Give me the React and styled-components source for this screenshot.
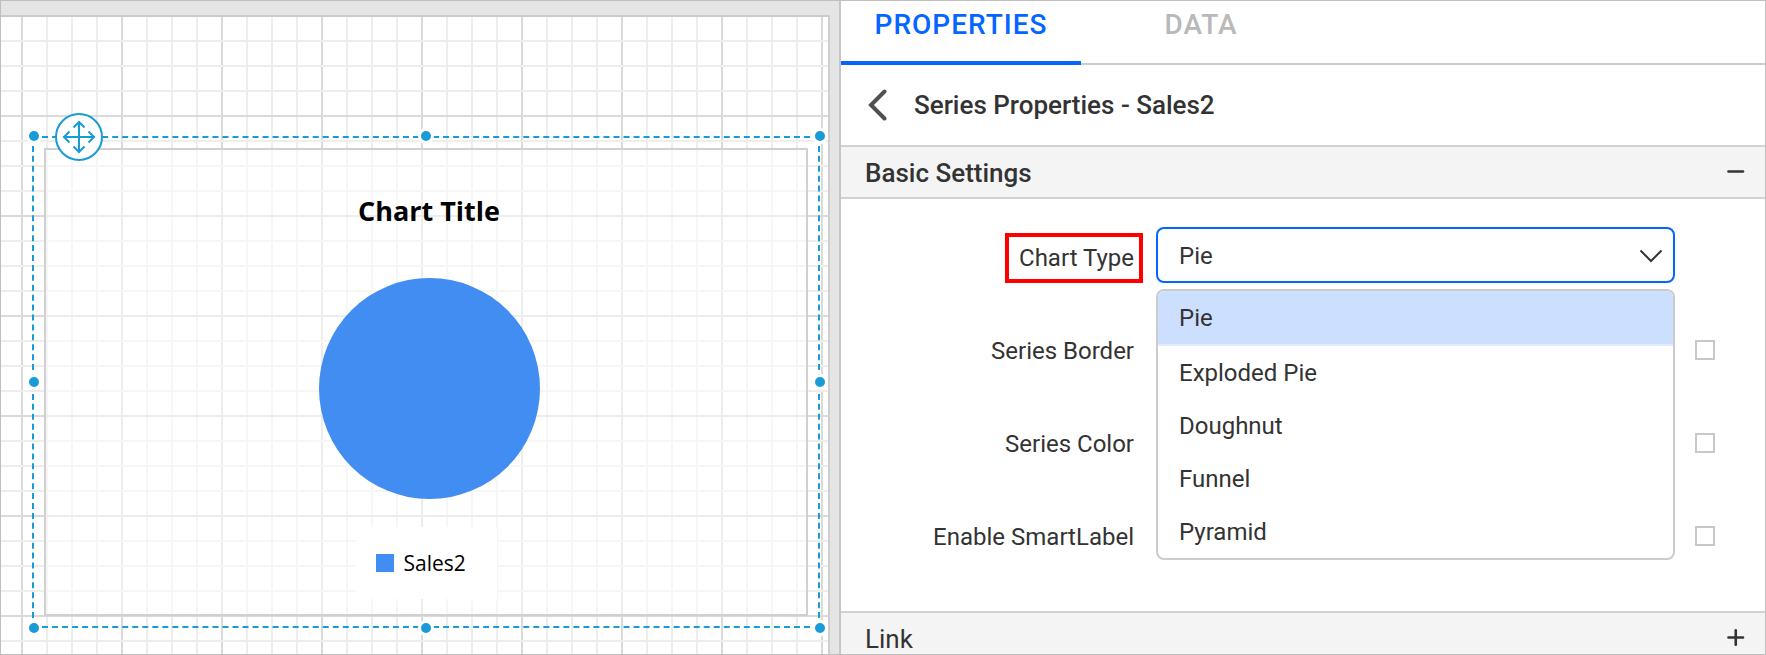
import React, { useState } from "react";
import styled, { createGlobalStyle, css } from "styled-components";

const colors = {
  accent: "#0565ff",
  select: "#189bd7",
  line: "#cccccc",
  text: "#333333",
  series: "#418df1",
};

const GlobalStyle = createGlobalStyle`
  * { box-sizing: border-box; }
  body {
    margin: 0;
    font-family: Roboto, "Liberation Sans", sans-serif;
    font-size: 24px;
    color: ${colors.text};
  }
  button, select { font: inherit; color: inherit; }
`;

const Shell = styled.div`
  display: grid;
  grid-template-columns: minmax(0, 10fr) minmax(0, 11fr);
  grid-template-rows: minmax(0, 1fr);
  height: 100vh;
  overflow: hidden;
  border: 1px solid #bfbfbf;
`;

/* ---------- design canvas ---------- */

const Workspace = styled.main`
  display: flex;
  padding: 14px 9px 0 0;
  background: #e5e5e5;
  border-right: 2px solid #c6c6c6;
`;

const Page = styled.div`
  flex: 1;
  padding: 119px 8px 0 31px;
  border-top: 2px solid #cbcbcb;
  border-right: 2px solid #cfcfcf;
  background-color: #ffffff;
  background-image:
    linear-gradient(#dadada 2px, transparent 2px),
    linear-gradient(#ededed 2px, transparent 2px),
    linear-gradient(90deg, #dadada 2px, transparent 2px),
    linear-gradient(90deg, #ededed 2px, transparent 2px);
  background-size: 100px 100px, 25px 25px, 100px 100px, 25px 25px;
  background-position: 0 98px, 0 23px, 20px 0, 20px 0;
`;

const Selection = styled.div`
  position: relative;
  padding: 10px;
  border: 2px dashed ${colors.select};
`;

const place = {
  nw: css`left: 0; top: -2px;`,
  n: css`left: 50%; top: -2px;`,
  ne: css`left: calc(100% + 2px); top: -2px;`,
  w: css`left: 0; top: 50%;`,
  e: css`left: calc(100% + 2px); top: 50%;`,
  sw: css`left: 0; top: calc(100% + 2px);`,
  s: css`left: 50%; top: calc(100% + 2px);`,
  se: css`left: calc(100% + 2px); top: calc(100% + 2px);`,
};

const Handle = styled.span`
  position: absolute;
  width: 16px;
  height: 16px;
  margin: -8px;
  border: 3px solid #ffffff;
  border-radius: 50%;
  background: ${colors.select};
  ${({ $at }) => place[$at]}
`;

const MoveButton = styled.button`
  position: absolute;
  left: 21px;
  top: -25px;
  width: 48px;
  height: 48px;
  padding: 0;
  border: 0;
  background: none;
  cursor: move;
  svg { display: block; }
`;

const Chart = styled.figure`
  display: flex;
  flex-direction: column;
  align-items: center;
  margin: 0;
  padding: 41px 0 15px;
  border: 2px solid #d0d0d0;
  background: rgba(255, 255, 255, 0.5);
  font-family: "Open Sans", "Noto Sans", sans-serif;
  color: #000000;
`;

const Plot = styled.div`
  display: flex;
  flex-direction: column;
  align-items: center;
  gap: 47px;
  padding-left: 6px;
`;

const ChartTitle = styled.figcaption`
  font-size: 27px;
  font-weight: 700;
  line-height: 40px;
`;

const PieDrawing = styled.svg`
  display: block;
  width: 221px;
  height: 221px;
`;

const Legend = styled.div`
  display: flex;
  align-items: center;
  gap: 10px;
  width: 141px;
  height: 72px;
  margin-top: 28px;
  padding-left: 20px;
  background: #ffffff;
  font-size: 21px;
`;

const Swatch = styled.span`
  width: 18px;
  height: 18px;
  background: ${colors.series};
`;

/* ---------- property panel ---------- */

const Panel = styled.aside`
  display: flex;
  flex-direction: column;
  overflow: hidden;
  background: #ffffff;
`;

const Tabs = styled.div`
  display: flex;
  flex-shrink: 0;
  height: 64px;
  border-bottom: 2px solid ${colors.line};
`;

const Tab = styled.button`
  width: 240px;
  height: 64px;
  padding: 0 0 14px;
  border: 0;
  border-bottom: 4px solid ${({ $active }) => ($active ? colors.accent : "transparent")};
  background: none;
  color: ${({ $active }) => ($active ? colors.accent : "#b9b9b9")};
  font-size: 28px;
  font-weight: 500;
  letter-spacing: 1px;
`;

const PanelTitle = styled.header`
  display: flex;
  flex-shrink: 0;
  align-items: center;
  gap: 27px;
  height: 80px;
  padding-left: 27px;
`;

const BackButton = styled.button`
  padding: 0;
  border: 0;
  background: none;
  svg { display: block; }
`;

const Heading = styled.h1`
  margin: 0;
  font-size: 26px;
  font-weight: 500;
`;

const SectionToggle = styled.button`
  display: flex;
  flex-shrink: 0;
  align-items: center;
  justify-content: space-between;
  height: 54px;
  padding: 2px 19px 0 24px;
  border: 0;
  border-top: 2px solid #d2d2d2;
  border-bottom: 2px solid #d2d2d2;
  background: #f4f4f4;
  font-size: 26px;
  font-weight: ${({ $open }) => ($open ? 500 : 400)};
  text-align: left;
`;

const Form = styled.div`
  display: flex;
  flex-direction: column;
  flex-shrink: 0;
  gap: 33px;
  padding: 28px 50px 45px 0;
`;

const Row = styled.div`
  display: grid;
  grid-template-columns: 302px minmax(0, 1fr) 20px;
  align-items: center;
  height: 60px;
`;

const Label = styled.label`
  justify-self: end;
  margin-top: 2px;
  padding: 0 5px 0 10px;
  border: 4px solid ${({ $marked }) => ($marked ? "#ff0000" : "transparent")};
  line-height: 42px;
  white-space: nowrap;
`;

const Combo = styled.div`
  position: relative;
  align-self: start;
  margin: 0 20px 0 13px;
`;

const Select = styled.select`
  display: block;
  width: 100%;
  height: 56px;
  padding: 2px 60px 0 21px;
  border: 2px solid ${colors.accent};
  border-radius: 8px;
  outline: 0;
  background: #ffffff;
  appearance: none;
`;

const Caret = styled.svg`
  position: absolute;
  right: 12px;
  top: 22px;
  pointer-events: none;
`;

const Menu = styled.ul`
  position: absolute;
  z-index: 1;
  top: 62px;
  left: 0;
  right: 0;
  margin: 0;
  padding: 0;
  overflow: hidden;
  border: 2px solid ${colors.line};
  border-radius: 8px;
  background: #ffffff;
  list-style: none;
`;

const Option = styled.li`
  padding: 2px 0 0 21px;
  line-height: 51px;
  cursor: pointer;
  ${({ $active }) =>
    $active &&
    css`
      border-bottom: 2px solid #dfeafd;
      background: #cddfff;
    `}
`;

const Checkbox = styled.input`
  grid-column: 3;
  width: 20px;
  height: 20px;
  margin: 0;
  border: 2px solid #c8c8c8;
  background: #ffffff;
  appearance: none;
  &:checked { background: ${colors.accent}; }
`;

const chartTypes = ["Pie", "Exploded Pie", "Doughnut", "Funnel", "Pyramid"];
const toggles = [
  { id: "series-border", label: "Series Border" },
  { id: "series-color", label: "Series Color" },
  { id: "smart-label", label: "Enable SmartLabel" },
];

function MoveIcon() {
  return (
    <svg width="48" height="48" viewBox="0 0 48 48" fill="none" stroke={colors.select} strokeWidth="2">
      <circle cx="24" cy="24" r="23" fill="#ffffff" />
      <path d="M24 8.500V39.500M8.500 24H39.500" />
      <path
        d="M18.500 14.500L24 9L29.500 14.500M18.500 33.500L24 39L29.500 33.500M14.500 18.500L9 24L14.500 29.500M33.500 18.500L39 24L33.500 29.500"
      />
    </svg>
  );
}

function ToggleIcon({ open }) {
  return (
    <svg width="20" height="20" viewBox="0 0 20 20" stroke={colors.text} strokeWidth="2.600" strokeLinecap="round">
      <path d={open ? "M2.500 8.500H17" : "M2.500 8.500H17M9.750 1.300V15.700"} />
    </svg>
  );
}

export default function App() {
  const [type, setType] = useState("Pie");

  return (
    <>
      <GlobalStyle />
      <Shell>
        <Workspace>
          <Page>
            <Selection>
              <Chart>
                <Plot>
                  <ChartTitle>Chart Title</ChartTitle>
                  <PieDrawing viewBox="0 0 221 221" role="img" aria-label="Pie chart of Sales2">
                    <circle cx="110.500" cy="110.500" r="110.500" fill={colors.series} />
                  </PieDrawing>
                </Plot>
                <Legend>
                  <Swatch />
                  <span>Sales2</span>
                </Legend>
              </Chart>
              {Object.keys(place).map((at) => (
                <Handle key={at} $at={at} />
              ))}
              <MoveButton aria-label="Move">
                <MoveIcon />
              </MoveButton>
            </Selection>
          </Page>
        </Workspace>

        <Panel>
          <Tabs role="tablist">
            <Tab role="tab" aria-selected="true" $active>PROPERTIES</Tab>
            <Tab role="tab" aria-selected="false">DATA</Tab>
          </Tabs>
          <PanelTitle>
            <BackButton aria-label="Back">
              <svg width="19" height="32" viewBox="0 0 19 32" fill="none" stroke="#505050" strokeWidth="4" strokeLinecap="round">
                <path d="M16.500 2.500L3 16L16.500 29.500" />
              </svg>
            </BackButton>
            <Heading>Series Properties - Sales2</Heading>
          </PanelTitle>
          <SectionToggle aria-expanded="true" $open>
            Basic Settings
            <ToggleIcon open />
          </SectionToggle>
          <Form>
            <Row>
              <Label htmlFor="chart-type" $marked>Chart Type</Label>
              <Combo>
                <Select id="chart-type" value={type} onChange={(e) => setType(e.target.value)}>
                  {chartTypes.map((name) => (
                    <option key={name}>{name}</option>
                  ))}
                </Select>
                <Caret width="24" height="14" viewBox="0 0 24 14" fill="none" stroke={colors.text} strokeWidth="2">
                  <path d="M1.500 1.500L12 12L22.500 1.500" />
                </Caret>
                <Menu role="listbox" aria-label="Chart Type">
                  {chartTypes.map((name) => (
                    <Option
                      key={name}
                      role="option"
                      aria-selected={name === type}
                      $active={name === type}
                      onClick={() => setType(name)}
                    >
                      {name}
                    </Option>
                  ))}
                </Menu>
              </Combo>
            </Row>
            {toggles.map(({ id, label }) => (
              <Row key={id}>
                <Label htmlFor={id}>{label}</Label>
                <Checkbox id={id} type="checkbox" />
              </Row>
            ))}
          </Form>
          <SectionToggle aria-expanded="false">
            Link
            <ToggleIcon />
          </SectionToggle>
        </Panel>
      </Shell>
    </>
  );
}
